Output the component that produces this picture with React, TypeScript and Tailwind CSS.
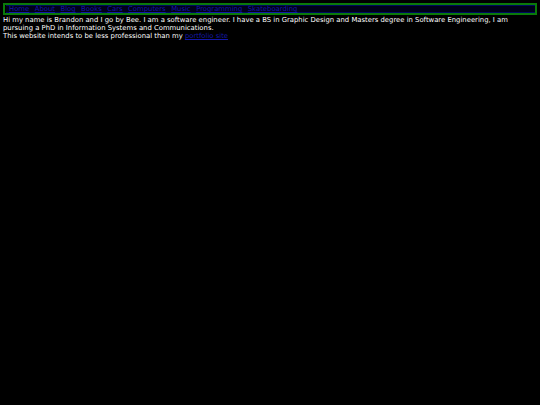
const links = [
  "Home",
  "About",
  "Blog",
  "Books",
  "Cars",
  "Computers",
  "Music",
  "Programming",
  "Skateboarding",
];

export default function App() {
  return (
    <div className="min-h-[405px] bg-black text-white font-['DejaVu_Sans',sans-serif] text-[6.85px] leading-[8px] p-[3px]">
      {/* Nav */}
      <div className="border-2 border-[#0a7a0a]">
        <div className="flex gap-[5.5px] border-y border-[#000a60] bg-[#00001a] pl-[3px] leading-[6px] h-[8px] ml-px">
          {links.map((l) => (
            <a key={l} href="#" className="text-[#1418a8] underline">
              {l}
            </a>
          ))}
        </div>
      </div>

      {/* Intro */}
      <p className="mt-px">
        Hi my name is Brandon and I go by Bee. I am a software engineer. I have
        a BS in Graphic Design and Masters degree in Software Engineering, I am
        pursuing a PhD in Information Systems and Communications.
      </p>
      <p>
        This website intends to be less professional than my{" "}
        <a href="#" className="text-[#1418a8] underline">
          portfolio site
        </a>
      </p>
    </div>
  );
}
